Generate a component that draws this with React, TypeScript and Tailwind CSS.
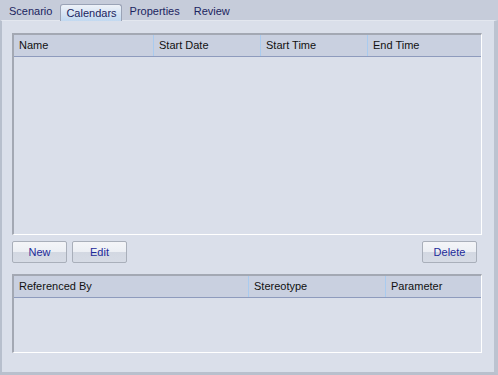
const TABS = ["Scenario", "Calendars", "Properties", "Review"];

type Col = { label: string; w: string };

const TOP_COLS: Col[] = [
  { label: "Name", w: "w-[140px]" },
  { label: "Start Date", w: "w-[107px]" },
  { label: "Start Time", w: "w-[107px]" },
  { label: "End Time", w: "flex-1" },
];

const BOTTOM_COLS: Col[] = [
  { label: "Referenced By", w: "w-[235px]" },
  { label: "Stereotype", w: "w-[137px]" },
  { label: "Parameter", w: "flex-1" },
];

function ListView({ cols, h }: { cols: Col[]; h: string }) {
  return (
    <div className={`flex flex-col border-t-2 border-l-2 border-t-[#a3a8b3] border-l-[#a3a8b3] border-b border-r border-b-white border-r-white ${h}`}>
      <div className="flex h-[22px] shrink-0 border-b border-[#8e9bbd] bg-[#c9d0e0]">
        {cols.map((c, i) => (
          <div
            key={c.label}
            className={`flex items-center pl-[5px] text-[11px] text-[#111111] ${c.w} ${
              i < cols.length - 1 ? "border-r border-[#a9cbef]" : ""
            }`}
          >
            {c.label}
          </div>
        ))}
      </div>
      <div className="flex-1 bg-[#dadfea]" />
    </div>
  );
}

function Btn({ label, w }: { label: string; w: string }) {
  return (
    <button
      type="button"
      className={`flex h-[22px] ${w} items-center justify-center rounded-[2px] border border-[#a9afba] bg-[linear-gradient(#f4f5f8_0%,#eceff4_50%,#d3d8e2_52%,#d6dbe5_100%)] text-[11px] text-[#1d2a9a]`}
    >
      {label}
    </button>
  );
}

export default function App() {
  return (
    <div className="flex h-[375px] w-[498px] flex-col bg-[#c6ccda] font-['Liberation_Sans',Arial,sans-serif]">
      {/* tab strip */}
      <div className="flex h-[20px] shrink-0 items-end pl-[2px]">
        {TABS.map((t) =>
          t === "Calendars" ? (
            <div
              key={t}
              className="relative -mb-px ml-[1px] mr-[1px] flex h-[17px] items-center rounded-t-[3px] border border-b-0 border-[#9aa3b6] bg-[linear-gradient(#eef2f8,#d3e2f3_60%,#c2d9f0)] pl-[5px] pr-[4px] text-[11px] text-[#1b2460]"
            >
              {t}
            </div>
          ) : (
            <div key={t} className="flex h-[17px] items-center px-[7px] text-[11px] text-[#1b2460]">
              {t}
            </div>
          )
        )}
      </div>

      {/* page */}
      <div className="flex flex-1 flex-col border-t border-l-2 border-r-[4px] border-b-[3px] border-t-[#e3e7ef] border-l-[#b7bfcd] border-r-[#bcc3d0] border-b-[#b9c0cd] bg-[#dadfea] pl-[10px] pr-[12px] pt-[12px]">
        <ListView cols={TOP_COLS} h="h-[202px]" />
        <div className="mt-[6px] flex items-center">
          <Btn label="New" w="w-[55px]" />
          <div className="w-[5px]" />
          <Btn label="Edit" w="w-[55px]" />
          <div className="flex-1" />
          <Btn label="Delete" w="w-[55px]" />
          <div className="w-[5px]" />
        </div>
        <div className="mt-[11px]">
          <ListView cols={BOTTOM_COLS} h="h-[79px]" />
        </div>
      </div>
    </div>
  );
}
